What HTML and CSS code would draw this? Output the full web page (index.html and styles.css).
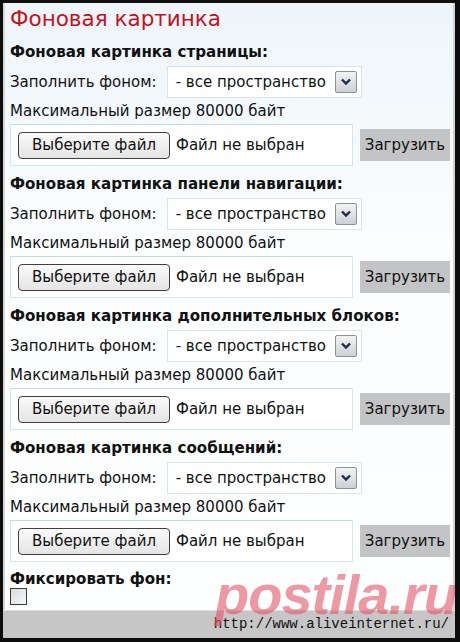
FILE: index.html
```html
<!DOCTYPE html>
<html lang="ru">
<head>
<meta charset="utf-8">
<title>Фоновая картинка</title>
<link rel="stylesheet" href="styles.css">
</head>
<body>
<div class="frame">
  <div class="panel">
    <h1 class="title">Фоновая картинка</h1>

    <section class="group">
      <h2 class="group-title">Фоновая картинка страницы:</h2>
      <div class="fill-row">
        <span class="label">Заполнить фоном:</span>
        <div class="select"><span>- все пространство</span><span class="select-arrow"><svg viewBox="0 0 10 8" width="10" height="8"><path d="M1 1.5 L5 5.5 L9 1.5" fill="none" stroke="#1c2a4a" stroke-width="2.4"/></svg></span></div>
      </div>
      <div class="hint">Максимальный размер 80000 байт</div>
      <div class="upload-row">
        <div class="file-box"><span class="file-btn">Выберите файл</span><span class="file-name">Файл не выбран</span></div>
        <span class="upload-btn">Загрузить</span>
      </div>
    </section>

    <section class="group">
      <h2 class="group-title">Фоновая картинка панели навигации:</h2>
      <div class="fill-row">
        <span class="label">Заполнить фоном:</span>
        <div class="select"><span>- все пространство</span><span class="select-arrow"><svg viewBox="0 0 10 8" width="10" height="8"><path d="M1 1.5 L5 5.5 L9 1.5" fill="none" stroke="#1c2a4a" stroke-width="2.4"/></svg></span></div>
      </div>
      <div class="hint">Максимальный размер 80000 байт</div>
      <div class="upload-row">
        <div class="file-box"><span class="file-btn">Выберите файл</span><span class="file-name">Файл не выбран</span></div>
        <span class="upload-btn">Загрузить</span>
      </div>
    </section>

    <section class="group">
      <h2 class="group-title">Фоновая картинка дополнительных блоков:</h2>
      <div class="fill-row">
        <span class="label">Заполнить фоном:</span>
        <div class="select"><span>- все пространство</span><span class="select-arrow"><svg viewBox="0 0 10 8" width="10" height="8"><path d="M1 1.5 L5 5.5 L9 1.5" fill="none" stroke="#1c2a4a" stroke-width="2.4"/></svg></span></div>
      </div>
      <div class="hint">Максимальный размер 80000 байт</div>
      <div class="upload-row">
        <div class="file-box"><span class="file-btn">Выберите файл</span><span class="file-name">Файл не выбран</span></div>
        <span class="upload-btn">Загрузить</span>
      </div>
    </section>

    <section class="group">
      <h2 class="group-title">Фоновая картинка сообщений:</h2>
      <div class="fill-row">
        <span class="label">Заполнить фоном:</span>
        <div class="select"><span>- все пространство</span><span class="select-arrow"><svg viewBox="0 0 10 8" width="10" height="8"><path d="M1 1.5 L5 5.5 L9 1.5" fill="none" stroke="#1c2a4a" stroke-width="2.4"/></svg></span></div>
      </div>
      <div class="hint">Максимальный размер 80000 байт</div>
      <div class="upload-row">
        <div class="file-box"><span class="file-btn">Выберите файл</span><span class="file-name">Файл не выбран</span></div>
        <span class="upload-btn">Загрузить</span>
      </div>
    </section>

    <section class="fixed">
      <h2 class="group-title">Фиксировать фон:</h2>
      <span class="checkbox"></span>
    </section>
  </div>
  <div class="footer">http://www.aliveinternet.ru/</div>
  <div class="watermark">postila.ru</div>
</div>
</body>
</html>
```

FILE: styles.css
```css
html, body {
  margin: 0;
  padding: 0;
  background: #0d0d0d;
}

.frame {
  position: relative;
  width: 460px;
  height: 642px;
  box-sizing: border-box;
  border: 3px solid #0d0d0d;
  border-right-width: 5px;
  border-bottom-width: 4px;
  display: flex;
  flex-direction: column;
  font-family: "DejaVu Sans", Verdana, sans-serif;
  color: #111;
  overflow: hidden;
}

.panel {
  flex: 1;
  background: linear-gradient(#eef5fa, #fbfdfe 40%, #fdfefe);
  border-left: 2px solid #d6d6d6;
  border-right: 2px solid #d2d2d2;
  padding: 5px 0 0 5px;
}

.title {
  margin: 0;
  font-size: 21.5px;
  line-height: 22px;
  font-weight: normal;
  color: #c4121e;
}

.group {
  margin-top: 12px;
}

.group + .group {
  margin-top: 8px;
}

.group-title {
  margin: 0;
  font-size: 15.1px;
  line-height: 20px;
  font-weight: bold;
}

.fill-row {
  margin-top: 4px;
  display: flex;
  align-items: center;
  gap: 10px;
  font-size: 15px;
}

.select {
  width: 195px;
  height: 32px;
  box-sizing: border-box;
  border: 1px solid #dbe4ea;
  background: #fff;
  display: flex;
  align-items: center;
  justify-content: space-between;
  padding: 0 4px 0 8px;
}

.select-arrow {
  width: 22px;
  height: 22px;
  box-sizing: border-box;
  border: 1px solid #8c929a;
  border-radius: 2px;
  background: linear-gradient(#f2f3f5, #cdd0d5);
  display: flex;
  align-items: center;
  justify-content: center;
}

.hint {
  margin-top: 2px;
  font-size: 15px;
  line-height: 22px;
}

.upload-row {
  margin-top: 2px;
  display: flex;
  align-items: center;
  gap: 7px;
}

.file-box {
  width: 343px;
  height: 42px;
  box-sizing: border-box;
  border: 1px solid #d6e6ec;
  border-top-color: #bfdfe6;
  background: #fff;
  display: flex;
  align-items: center;
  gap: 6px;
  padding-left: 7px;
  font-size: 15px;
}

.file-btn {
  width: 152px;
  height: 27px;
  box-sizing: border-box;
  border: 1px solid #3f3f3f;
  border-radius: 4px;
  background: linear-gradient(#fafafa, #e4e4e4);
  display: flex;
  align-items: center;
  justify-content: center;
}

.upload-btn {
  width: 90px;
  height: 32px;
  background: #c3c4c5;
  display: flex;
  align-items: center;
  justify-content: center;
  font-size: 15px;
}

.fixed {
  margin-top: 7px;
}

.checkbox {
  display: block;
  margin-top: -1px;
  width: 17px;
  height: 17px;
  box-sizing: border-box;
  border: 1px solid #3a3a3a;
  background: linear-gradient(135deg, #d9dbe0, #f7f7f9);
}

.footer {
  height: 27px;
  background: #c6c6c6;
  border-top: 1px solid #dedede;
  font-family: "Liberation Mono", "Courier New", monospace;
  font-size: 14px;
  line-height: 27px;
  text-align: right;
  padding-right: 6px;
}

/* site stamp laid over the bottom-right corner */
.watermark {
  position: absolute;
  left: 212px;
  top: 560px;
  font-family: "Liberation Sans", Arial, sans-serif;
  font-weight: bold;
  font-style: italic;
  font-size: 56px;
  line-height: 64px;
  letter-spacing: -1px;
  color: rgba(226, 84, 102, 0.6);
  pointer-events: none;
}
```
